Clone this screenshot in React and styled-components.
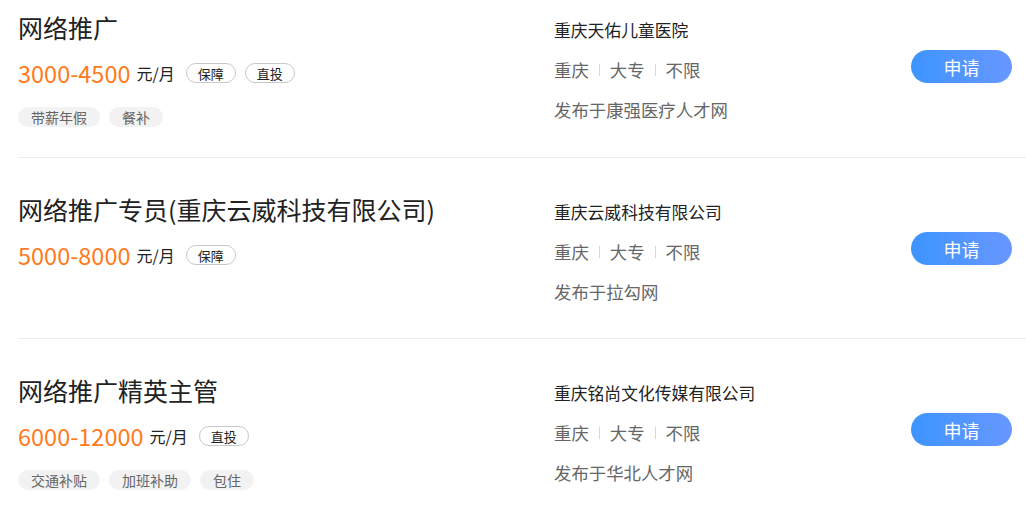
import React from 'react'
import styled, { createGlobalStyle } from 'styled-components'

const GlobalStyle = createGlobalStyle`
  html, body {
    margin: 0;
    padding: 0;
    background: #fff;
  }
  body {
    font-family: "Noto Sans CJK SC", "Noto Sans", sans-serif;
    color: #222;
  }
`

const List = styled.ul`
  list-style: none;
  margin: 0;
  padding: 0;
  overflow: hidden;
`

const Row = styled.li`
  display: flex;
  align-items: flex-start;
  box-sizing: border-box;
  height: 181px;
  margin-left: 18px;
  padding-top: 34px;
  border-bottom: 1px solid #ececec;

  &:first-child {
    height: 158px;
    padding-top: 10px;
  }
`

const Main = styled.div`
  width: 536px;
  flex: 0 0 536px;
`

const Title = styled.h3`
  margin: 0;
  font-size: 25px;
  line-height: 34px;
  font-weight: 400;
  color: #222;
  white-space: nowrap;
`

const SalaryLine = styled.div`
  display: flex;
  align-items: center;
  height: 30px;
  margin-top: 14px;
`

const Salary = styled.span`
  font-size: 23.5px;
  color: #ff7a1c;
  margin-right: 6px;
`

const Unit = styled.span`
  font-size: 16px;
  color: #222;
  margin-right: 11px;
`

const Badge = styled.span`
  display: inline-flex;
  align-items: center;
  box-sizing: border-box;
  height: 20px;
  padding: 0 11px;
  margin-right: 9px;
  border: 1px solid #c8c8c8;
  border-radius: 10px;
  font-size: 13px;
  color: #222;
`

const Perks = styled.div`
  display: flex;
  gap: 9px;
  margin-top: 19px;
`

const Perk = styled.span`
  display: inline-flex;
  align-items: center;
  height: 20px;
  padding: 0 13px;
  border-radius: 10px;
  background: #f2f2f2;
  font-size: 14px;
  color: #666;
`

const Side = styled.div`
  display: flex;
  flex-direction: column;
  gap: 16px;
  padding-top: 8px;
`

const Company = styled.div`
  font-size: 16.8px;
  line-height: 24px;
  color: #222;
`

const Meta = styled.div`
  display: flex;
  align-items: center;
  font-size: 17.4px;
  line-height: 24px;
  color: #666;
`

const Divider = styled.i`
  display: inline-block;
  width: 1px;
  height: 12px;
  margin: 0 10px;
  background: #d8d8d8;
`

const Source = styled.div`
  font-size: 17.4px;
  line-height: 24px;
  color: #666;
`

const ApplyButton = styled.button`
  align-self: flex-start;
  margin-top: 40px;
  margin-left: auto;
  margin-right: 14px;
  width: 101px;
  height: 33px;
  border: none;
  border-radius: 17px;
  background: linear-gradient(90deg, #3d94ff, #6897ff);
  color: #fff;
  font-family: inherit;
  font-size: 18px;
  cursor: pointer;
`

const jobs = [
  {
    title: '网络推广',
    salary: '3000-4500',
    badges: ['保障', '直投'],
    perks: ['带薪年假', '餐补'],
    company: '重庆天佑儿童医院',
    source: '发布于康强医疗人才网',
  },
  {
    title: '网络推广专员(重庆云威科技有限公司)',
    salary: '5000-8000',
    badges: ['保障'],
    perks: [],
    company: '重庆云威科技有限公司',
    source: '发布于拉勾网',
  },
  {
    title: '网络推广精英主管',
    salary: '6000-12000',
    badges: ['直投'],
    perks: ['交通补贴', '加班补助', '包住'],
    company: '重庆铭尚文化传媒有限公司',
    source: '发布于华北人才网',
  },
]

const JobRow = ({ job }) => (
  <Row>
    <Main>
      <Title>{job.title}</Title>
      <SalaryLine>
        <Salary>{job.salary}</Salary>
        <Unit>元/月</Unit>
        {job.badges.map((b) => <Badge key={b}>{b}</Badge>)}
      </SalaryLine>
      {job.perks.length > 0 && (
        <Perks>
          {job.perks.map((p) => <Perk key={p}>{p}</Perk>)}
        </Perks>
      )}
    </Main>
    <Side>
      <Company>{job.company}</Company>
      <Meta>
        重庆<Divider />大专<Divider />不限
      </Meta>
      <Source>{job.source}</Source>
    </Side>
    <ApplyButton>申请</ApplyButton>
  </Row>
)

export default function App() {
  return (
    <>
      <GlobalStyle />
      <List>
        {jobs.map((job) => <JobRow key={job.title} job={job} />)}
      </List>
    </>
  )
}
